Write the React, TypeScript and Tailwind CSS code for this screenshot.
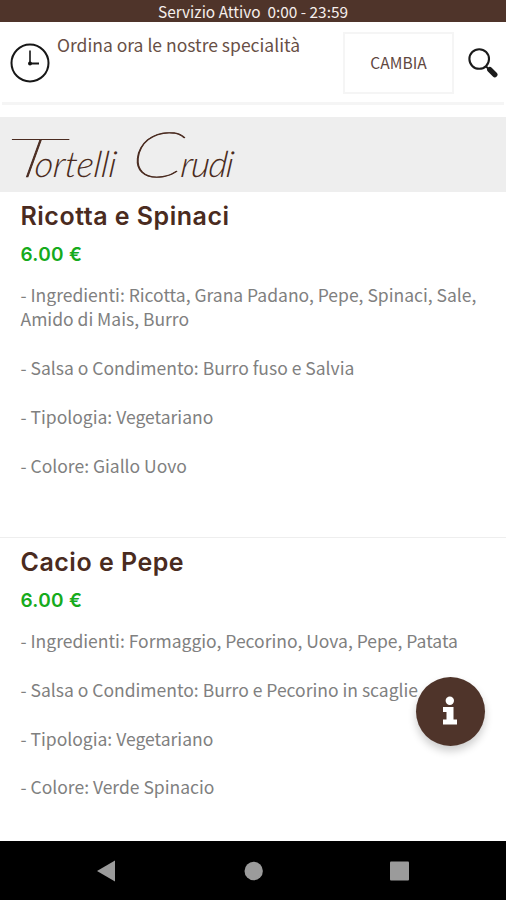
type Dish = { name: string; price: string; details: string[] };

const dishes: Dish[] = [
  {
    name: "Ricotta e Spinaci",
    price: "6.00 €",
    details: [
      "- Ingredienti: Ricotta, Grana Padano, Pepe, Spinaci, Sale, Amido di Mais, Burro",
      "- Salsa o Condimento: Burro fuso e Salvia",
      "- Tipologia: Vegetariano",
      "- Colore: Giallo Uovo",
    ],
  },
  {
    name: "Cacio e Pepe",
    price: "6.00 €",
    details: [
      "- Ingredienti: Formaggio, Pecorino, Uova, Pepe, Patata",
      "- Salsa o Condimento: Burro e Pecorino in scaglie",
      "- Tipologia: Vegetariano",
      "- Colore: Verde Spinacio",
    ],
  },
];

function ClockIcon() {
  return (
    <svg className="size-[40px] shrink-0" viewBox="0 0 40 40" fill="none" stroke="#171717">
      <circle cx="20" cy="20" r="18.5" strokeWidth="2" />
      <path d="M20 7.5V20.5" strokeWidth="2" stroke="#444" />
      <path d="M20 20.5H29" strokeWidth="2" />
      <circle cx="20" cy="20.5" r="2" fill="#111" stroke="none" />
    </svg>
  );
}

function SearchIcon() {
  return (
    <svg className="h-[32px] w-[32px] shrink-0" viewBox="0 0 32 32" fill="none" stroke="#1b1b1b">
      <circle cx="11.2" cy="12" r="9.8" strokeWidth="2.1" />
      <path d="M17.6 19L21 22.4" strokeWidth="2" />
      <path d="M21.8 22.6L26.8 27.6" strokeWidth="5.4" strokeLinecap="round" />
    </svg>
  );
}

function DishRow({ dish }: { dish: Dish }) {
  return (
    <article className="h-[346px] border-b border-[#eeeeee] px-[20.5px] pt-[8px]">
      <h2 className="h-[34px] whitespace-nowrap font-['Inter','Liberation_Sans',sans-serif] text-[25px] leading-[32px] font-semibold tracking-[0.5px] text-[#4a2b20]">
        {dish.name}
      </h2>
      <p className="h-[40px] pt-[6px] font-['Inter','Liberation_Sans',sans-serif] text-[19px] leading-[30px] font-semibold tracking-[0.3px] text-[#16ab1c]">
        {dish.price}
      </p>
      <div className="flex flex-col gap-[24.4px] pt-[9px] text-[17.5px] leading-[24.4px] text-[#808080]">
        {dish.details.map((line) => (
          <p key={line}>{line}</p>
        ))}
      </div>
    </article>
  );
}

export default function App() {
  return (
    <div className="relative flex h-[900px] w-[506px] flex-col overflow-hidden bg-white font-['Noto_Sans_CJK_SC','Noto_Sans',sans-serif]">
      <div className="h-[22px] shrink-0 bg-[#4f342a] text-center text-[15.4px] leading-[23px] whitespace-pre text-[#f6efec]">
        {"Servizio Attivo  0:00 - 23:59"}
      </div>
      <header className="mx-[2px] flex h-[83px] shrink-0 border-b-[3px] border-[#f5f5f5] pl-[8px]">
        <div className="pt-[21px]">
          <ClockIcon />
        </div>
        <p className="w-[285px] shrink-0 pt-[11px] pl-[7px] text-[17.5px] leading-[24px] whitespace-nowrap text-[#684f46]">
          Ordina ora le nostre specialità
        </p>
        <button className="mt-[10px] ml-[8px] h-[62px] w-[111px] shrink-0 border-2 border-[#f5f5f5] text-[15.6px] text-[#5f483f]">
          CAMBIA
        </button>
        <div className="pt-[25px] pl-[14px]">
          <SearchIcon />
        </div>
      </header>
      <div className="mt-[12px] h-[75px] shrink-0 bg-[#eeeeee] pt-[6px]">
        <h1 className="flex origin-bottom-left -skew-x-6 items-baseline font-['Lato','Liberation_Sans',sans-serif] text-[36px] leading-[60px] font-light whitespace-nowrap text-[#4a2b20] italic">
          <span className="w-[32px] origin-left scale-x-[2.1] text-[54px] font-thin [-webkit-text-stroke:0.5px_#4a2b20]">
            T
          </span>
          <span className="w-[96px]">ortelli</span>
          <span className="w-[50px] origin-left scale-x-[1.3] text-[63px] font-thin [-webkit-text-stroke:0.7px_#4a2b20]">
            C
          </span>
          <span className="tracking-[-1.2px]">rudi</span>
        </h1>
      </div>
      <main className="h-[649px] shrink-0 overflow-hidden">
        {dishes.map((dish) => (
          <DishRow key={dish.name} dish={dish} />
        ))}
      </main>
      <button
        aria-label="Info"
        className="absolute top-[676.5px] left-[415.5px] flex size-[69px] items-center justify-center rounded-full bg-[#4f342a] shadow-[0_5px_9px_rgba(0,0,0,0.2)]"
      >
        <svg className="h-[30px] w-[16px]" viewBox="0 0 16 30" fill="#fff">
          <circle cx="7.8" cy="4.8" r="4.2" />
          <path d="M1 11H11.5V23.5H15V28.5H1V23.5H4.5V16H1Z" />
        </svg>
      </button>
      <nav className="flex h-[59px] shrink-0 bg-black">
        <svg className="h-[59px] w-[506px]" viewBox="0 841 506 59" fill="#9b9b9b">
          <path d="M97 871L115 860.5V881.5Z" />
          <circle cx="253.7" cy="871" r="9.2" />
          <rect x="390" y="861.5" width="19" height="19" rx="1" />
        </svg>
      </nav>
    </div>
  );
}
